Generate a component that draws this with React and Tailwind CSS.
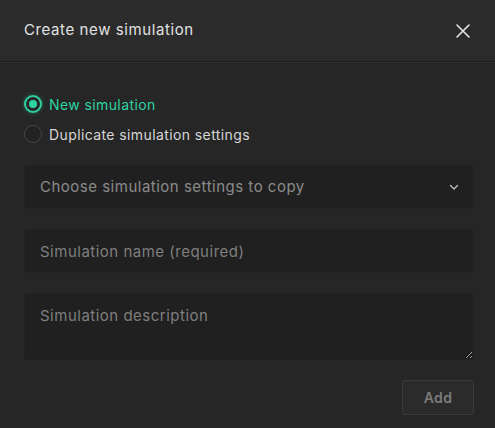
import React, { useState } from 'react'

const Radio = ({ checked, label, onClick }) => (
    <button type="button" onClick={onClick} className="flex items-center gap-[7px] h-[30px] text-left">
        <span
            className={
                checked
                    ? 'w-[18px] h-[18px] rounded-full border-2 border-[#2ed3a0] flex items-center justify-center shadow-[0_0_4px_rgba(46,211,160,0.4)]'
                    : 'w-[18px] h-[18px] rounded-full border border-[#474747] bg-[#222222]'
            }
        >
            {checked && <span className="w-[8px] h-[8px] rounded-full bg-[#2ed3a0]" />}
        </span>
        <span className={checked ? 'text-[14px] tracking-[0.4px] text-[#2ed3a0]' : 'text-[14px] tracking-[0.4px] text-[#d6d6d6]'}>{label}</span>
    </button>
)

const App = () => {
    const [mode, setMode] = useState('new')
    const [name, setName] = useState('')
    const [desc, setDesc] = useState('')

    return (
        <div className="w-[495px] h-[428px] bg-[#262626] flex flex-col" style={{ fontFamily: 'Inter, "Noto Sans", sans-serif' }}>
            {/* Header */}
            <div className="h-[62px] bg-[#2b2b2b] border-b border-[#1b1b1b] shadow-[0_1px_0_#303030] flex items-center justify-between pl-[24px] pr-[23px] shrink-0">
                <h1 className="text-[15px] text-[#e2e2e2] tracking-[0.6px]">Create new simulation</h1>
                <button type="button" className="text-[#e6e6e6]">
                    <svg width="18" height="18" viewBox="0 0 18 18" fill="none" stroke="currentColor" strokeWidth="1.6" strokeLinecap="round">
                        <path d="M3 3L15 15M15 3L3 15" />
                    </svg>
                </button>
            </div>

            {/* Body */}
            <div className="flex flex-col pl-[24px] pr-[21px] pt-[27px]">
                <Radio checked={mode === 'new'} label="New simulation" onClick={() => setMode('new')} />
                <Radio checked={mode === 'dup'} label="Duplicate simulation settings" onClick={() => setMode('dup')} />

                <div className="mt-[16px] h-[44px] bg-[#202020] border border-[#232323] flex items-center justify-between pl-[15px] pr-[13px]">
                    <span className="text-[15px] tracking-[0.5px] text-[#8b8b8b]">Choose simulation settings to copy</span>
                    <svg width="12" height="12" viewBox="0 0 12 12" fill="none" stroke="#bdbdbd" strokeWidth="1.4" strokeLinecap="round" strokeLinejoin="round">
                        <path d="M2.5 4.5L6 8L9.5 4.5" />
                    </svg>
                </div>

                <input
                    type="text"
                    value={name}
                    onChange={(e) => setName(e.target.value)}
                    placeholder="Simulation name (required)"
                    className="mt-[20px] h-[44px] bg-[#202020] border border-[#232323] px-[15px] text-[15px] tracking-[0.5px] text-[#d6d6d6] placeholder:text-[#7f7f7f] outline-none"
                />

                <textarea
                    value={desc}
                    onChange={(e) => setDesc(e.target.value)}
                    placeholder="Simulation description"
                    className="mt-[20px] h-[67px] bg-[#202020] border border-[#232323] px-[15px] pt-[11px] text-[15px] tracking-[0.5px] text-[#d6d6d6] placeholder:text-[#7f7f7f] outline-none resize-y"
                />

                <div className="flex justify-end mt-[20px]">
                    <button
                        type="button"
                        disabled
                        className="w-[72px] h-[35px] rounded-[3px] bg-[#2b2b2b] border border-[#3a3a3a] text-[14px] tracking-[0.4px] font-semibold text-[#7a7a7a]"
                    >
                        Add
                    </button>
                </div>
            </div>
        </div>
    )
}

export default App
